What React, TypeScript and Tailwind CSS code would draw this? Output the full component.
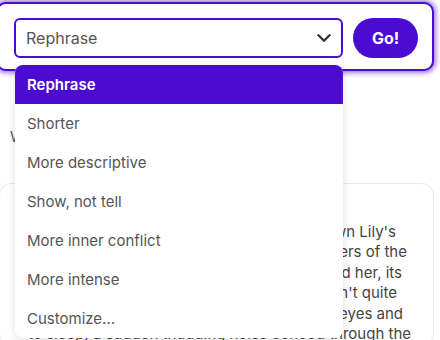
import { ChevronDown } from "lucide-react";

const options = [
  "Rephrase",
  "Shorter",
  "More descriptive",
  "Show, not tell",
  "More inner conflict",
  "More intense",
  "Customize...",
];

// right-aligned story lines, offsets tuned to where each line ends
const storyLines = [
  { text: "The wind howled and rattled down Lily's", pr: "pr-[15px]" },
  { text: "hallway, shaking the rafters of the", pr: "pr-[4px]" },
  { text: "The darkness pressed around her, its", pr: "pr-[9px]" },
  { text: "weight a thing she couldn't quite", pr: "pr-[14px]" },
  { text: "She pulled the blanket over her eyes and", pr: "pr-[8px]" },
  { text: "to sleep, a sudden thudding noise echoed through the", pr: "pr-0" },
];

export default function App() {
  return (
    <div className="relative w-[440px] h-[340px] overflow-hidden bg-white font-['Inter',sans-serif]">
      {/* Action bar */}
      <div className="-ml-[4px] mr-[6px] mt-[2px] flex items-center gap-[10px] rounded-[10px] border-2 border-[#4b0bd1] bg-white pl-[16px] pr-[14px] pt-[14px] pb-[11px] shadow-[0_0_5px_2px_rgba(75,11,209,0.55)]">
        <div className="flex h-[40px] flex-1 items-center justify-between rounded-[6px] border-2 border-[#4b0bd1] pl-[10px] pr-[6px]">
          <span className="text-[16px] text-[#555]">Rephrase</span>
          <ChevronDown size={22} strokeWidth={2.6} className="text-[#333]" />
        </div>
        <button className="h-[40px] w-[65px] rounded-full bg-[#4b0bd1] text-[16px] font-bold text-white">
          Go!
        </button>
      </div>

      <div className="mt-[55px] pl-[10px] text-[15px] text-[#555]">Write the next scene</div>

      {/* Story card */}
      <div className="-ml-[1px] mr-[6px] mt-[34px] rounded-[12px] border border-[#e8e8e8] pl-[20px] pr-[22px] pt-[38px] text-[15px] leading-[20.6px] text-[#444]">
        {storyLines.map((l) => (
          <div key={l.text} className={`whitespace-nowrap text-right ${l.pr}`}>
            {l.text}
          </div>
        ))}
      </div>

      {/* Open dropdown */}
      <div className="absolute left-[15px] top-[65px] w-[328px] overflow-hidden rounded-[8px] bg-white shadow-[0_2px_10px_rgba(0,0,0,0.12)]">
        {options.map((o, i) => (
          <div
            key={o}
            className={
              i === 0
                ? "flex h-[39px] items-center bg-[#4b0bd1] px-[12px] pt-[1px] text-[15px] font-semibold text-white"
                : "flex h-[39px] items-center px-[12px] pt-[1px] text-[15px] text-[#555]"
            }
          >
            {o}
          </div>
        ))}
      </div>
    </div>
  );
}
